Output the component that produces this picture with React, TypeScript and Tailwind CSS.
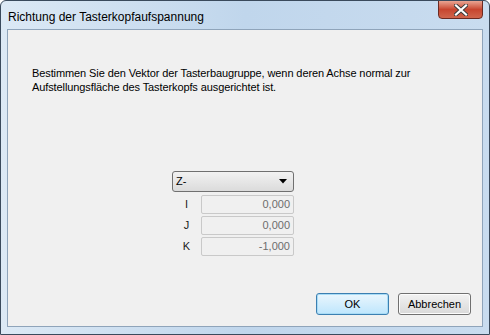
import React from "react"

const font = { fontFamily: "'Liberation Sans', Arial, sans-serif" }

function Field({ label, value }: { label: string; value: string }) {
  return (
    <div className="flex items-center h-[21px]">
      <span className="w-[29px] text-center text-[11px] text-[#1a1a1a]">{label}</span>
      <div className="w-[93px] h-[19px] border border-[#c9c9c9] bg-[#f0f0f0] rounded-[2px] flex items-center justify-end pr-[3px] text-[11px] text-[#6d6d6d]">
        {value}
      </div>
    </div>
  )
}

export default function App() {
  return (
    <div
      className="w-[490px] h-[335px] rounded-t-[6px] border border-[#3a4a5c] bg-gradient-to-r from-[#dce9f5] via-[#c0d6ec] to-[#c9dcef] flex flex-col overflow-hidden"
      style={font}
    >
      {/* Title bar */}
      <div className="h-[28px] flex justify-between pl-[7px] pr-[6px] shrink-0">
        <div className="pt-[7px] text-[12px] text-black">Richtung der Tasterkopfaufspannung</div>
        <div className="w-[45px] h-[19px] -mt-px rounded-b-[4px] border border-[#6b2a22] bg-gradient-to-b from-[#e8a493] via-[#c7452f] to-[#d0654c] flex items-center justify-center">
          <svg width="14" height="12" viewBox="0 0 14 12">
            <path d="M2 1.5 L12 10.5 M12 1.5 L2 10.5" stroke="#3a3a3a" strokeWidth="4" strokeLinecap="square" />
            <path d="M2 1.5 L12 10.5 M12 1.5 L2 10.5" stroke="#ffffff" strokeWidth="2.2" strokeLinecap="square" />
          </svg>
        </div>
      </div>

      {/* Client area */}
      <div className="flex-1 mx-[6px] mb-[7px] border border-[#8fa4ba] bg-[#f0f0f0] flex flex-col">
        <div className="pl-[24px] pt-[36px] text-[11px] leading-[14px] tracking-[-0.1px] text-black">
          <p>Bestimmen Sie den Vektor der Tasterbaugruppe, wenn deren Achse normal zur</p>
          <p>Aufstellungsfläche des Tasterkopfs ausgerichtet ist.</p>
        </div>

        <div className="ml-[164px] mt-[77px] flex flex-col">
          <div className="w-[122px] h-[21px] border border-[#707070] rounded-[3px] bg-gradient-to-b from-[#f2f2f2] to-[#dbdbdb] flex items-center justify-between pl-[3px] pr-[6px] text-[11px] text-black">
            <span>Z-</span>
            <svg width="8" height="5" viewBox="0 0 8 5">
              <path d="M0 0 H8 L4 4.5 Z" fill="#000" />
            </svg>
          </div>
          <div className="mt-[2px] flex flex-col">
            <Field label="I" value="0,000" />
            <Field label="J" value="0,000" />
            <Field label="K" value="-1,000" />
          </div>
        </div>

        <div className="mt-auto mb-[11px] flex justify-end gap-[9px] pr-[11px]">
          <button className="w-[73px] h-[22px] rounded-[3px] border border-[#3c7fb1] bg-gradient-to-b from-[#eaf6fd] to-[#bee6fd] text-[11px] text-black shadow-[inset_0_0_0_1px_#a9dcf6]">
            OK
          </button>
          <button className="w-[73px] h-[22px] rounded-[3px] border border-[#707070] bg-gradient-to-b from-[#f2f2f2] to-[#d9d9d9] text-[11px] text-black shadow-[inset_0_0_0_1px_#fcfcfc]">
            Abbrechen
          </button>
        </div>
      </div>
    </div>
  )
}
